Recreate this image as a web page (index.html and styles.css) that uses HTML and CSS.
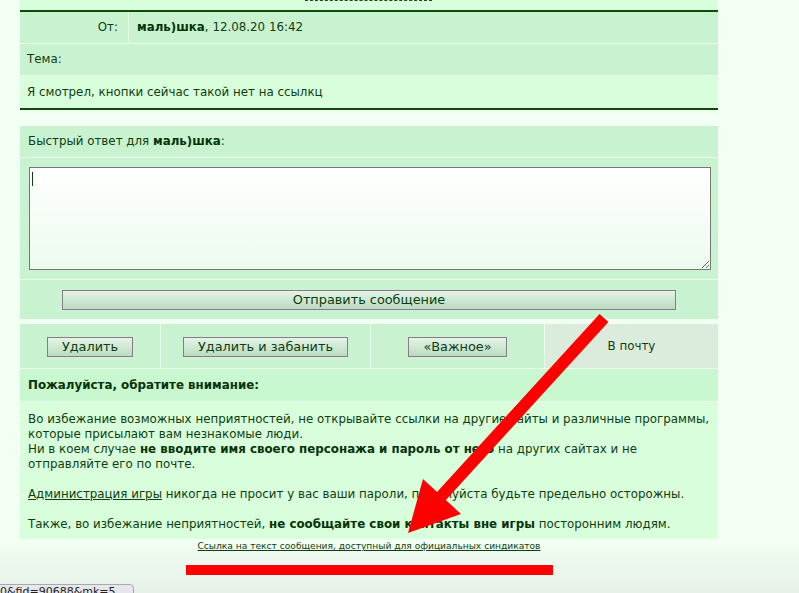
FILE: index.html
```html
<!DOCTYPE html>
<html lang="ru">
<head>
<meta charset="utf-8">
<title>Сообщение</title>
<link rel="stylesheet" href="styles.css">
</head>
<body>
<div class="page">
  <div class="topbar"><span class="dash"></span></div>

  <div class="post">
    <div class="meta">
      <div class="lbl">От:</div>
      <div class="val"><b>маль)шка</b>, 12.08.20 16:42</div>
    </div>
    <div class="subj">Тема:</div>
    <div class="msg">Я смотрел, кнопки сейчас такой нет на ссылкц</div>
  </div>

  <div class="reply">
    <div class="reply-head">Быстрый ответ для <b>маль)шка</b>:</div>
    <div class="reply-area"><div class="ta-wrap"><textarea class="ta"></textarea></div></div>
    <div class="reply-send"><button class="btn send">Отправить сообщение</button></div>
  </div>

  <div class="actions">
    <div class="cell"><button class="btn">Удалить</button></div>
    <div class="cell"><button class="btn">Удалить и забанить</button></div>
    <div class="cell"><button class="btn">«Важное»</button></div>
    <div class="cell mail">В почту</div>
  </div>

  <div class="notice">
    <div class="notice-head">Пожалуйста, обратите внимание:</div>
    <div class="notice-body">
      <p>Во избежание возможных неприятностей, не открывайте ссылки на другие сайты и различные программы, которые присылают вам незнакомые люди.<br>Ни в коем случае <b>не вводите имя своего персонажа и пароль от него</b> на других сайтах и не отправляйте его по почте.</p>
      <p><a href="#" class="adm">Администрация игры</a> никогда не просит у вас ваши пароли, пожалуйста будьте предельно осторожны.</p>
      <p>Также, во избежание неприятностей, <b>не сообщайте свои контакты вне игры</b> посторонним людям.</p>
    </div>
  </div>

  <div class="linkrow"><a href="#">Ссылка на текст сообщения, доступный для официальных синдикатов</a></div>
</div>

<svg class="annot" width="799" height="593" viewBox="0 0 799 593">
  <rect x="186" y="565" width="367" height="10" fill="#ff0000"/>
  <line x1="604" y1="318" x2="436" y2="502" stroke="#ff0000" stroke-width="12"/>
  <polygon points="408,533 461,514 423,479" fill="#ff0000"/>
</svg>

<div class="status">0&amp;fid=90688&amp;mk=5</div>
</body>
</html>
```
FILE: styles.css
```css
html, body {
  margin: 0;
  padding: 0;
}
body {
  width: 799px;
  height: 593px;
  overflow: hidden;
  position: relative;
  background: linear-gradient(#f2fff3 0, #f2fff3 540px, #e6f0e7 593px);
  font-family: "DejaVu Sans", Verdana, sans-serif;
  font-size: 11.85px;
  color: #0e3d10;
}
b { color: #063306; }
.page {
  width: 698px;
  margin-left: 20px;
}
.topbar {
  height: 10px;
  background: #d8fedb;
  position: relative;
}
.dash {
  display: block;
  margin-left: 285px;
  width: 127px;
  height: 2px;
  border-top: 1px dashed #1a4a1a;
}
.post {
  border-top: 2px solid #0d4a0d;
  border-bottom: 2px solid #0d4a0d;
  display: flex;
  flex-direction: column;
  gap: 1px;
  background: #eafcec;
}
.meta {
  display: flex;
  height: 31px;
  background: #c9f3d0;
  gap: 1px;
}
.meta .lbl {
  width: 98px;
  padding-right: 10px;
  text-align: right;
  line-height: 31px;
  background: #c9f3d0;
  box-shadow: 1px 0 0 #e4f8e6;
}
.meta .val {
  padding-left: 8px;
  line-height: 31px;
}
.subj {
  height: 31px;
  line-height: 31px;
  padding-left: 7px;
  background: #c9f3d0;
}
.msg {
  height: 32px;
  line-height: 32px;
  padding-left: 7px;
  background: #d8fedb;
}
.reply {
  margin-top: 16px;
  display: flex;
  flex-direction: column;
  gap: 1px;
  background: #eafcec;
}
.reply-head {
  height: 31px;
  line-height: 31px;
  padding-left: 8px;
  background: #c9f3d0;
}
.reply-area {
  background: #c9f3d0;
  padding: 9px 7px 9px 9px;
}
.ta-wrap {
  position: relative;
  width: 682px;
  height: 103px;
}
.ta-wrap::after {
  content: "";
  position: absolute;
  left: 3px;
  top: 5px;
  width: 1px;
  height: 14px;
  background: #0e3d10;
}
.ta {
  display: block;
  box-sizing: border-box;
  width: 682px;
  height: 103px;
  margin: 0;
  border: 1px solid #777;
  background: linear-gradient(#ffffff, #ecfbee);
  resize: both;
}
.reply-send {
  background: #c9f3d0;
  height: 39px;
  display: flex;
  align-items: center;
  justify-content: center;
}
.btn {
  font-family: "DejaVu Sans", Verdana, sans-serif;
  font-size: 12.85px;
  color: #0e3d10;
  height: 20px;
  padding: 0 14px;
  border: 1px solid #8a7a8a;
  border-radius: 0;
  background: linear-gradient(#e4f4e6, #b9dcc1);
  line-height: 18px;
}
.send {
  width: 614px;
  margin-top: 1px;
}
.actions {
  margin-top: 5px;
  display: grid;
  grid-template-columns: 140px 209px 173px 173px;
  column-gap: 1px;
  height: 44px;
  background: #eafcec;
  border-bottom: 1px solid #eafcec;
}
.cell {
  background: #c9f3d0;
  display: flex;
  align-items: center;
  justify-content: center;
}
.cell .btn { margin-top: 1px; }
.cell.mail {
  background: #dcecdc;
}
.notice-head {
  height: 32px;
  line-height: 32px;
  padding-left: 8px;
  font-weight: bold;
  color: #063306;
  background: #c9f7cf;
  border-bottom: 1px solid #eafcec;
}
.notice-body {
  background: #d8fedb;
  padding: 10px 4px 7px 8px;
  line-height: 15px;
}
.notice-body p {
  margin: 0 0 15px 0;
}
.notice-body p:last-child { margin-bottom: 0; }
a { color: #0e3d10; }
.adm { color: #0e3d10; }
.linkrow {
  text-align: center;
  font-size: 9.1px;
  padding-top: 1px;
  line-height: 12px;
}
.annot {
  position: absolute;
  left: 0;
  top: 0;
  pointer-events: none;
}
.status {
  position: absolute;
  left: -12px;
  top: 584px;
  width: 146px;
  height: 20px;
  border: 1px solid #a8a8b0;
  border-radius: 4px;
  background: #e6e6ec;
  font-family: "DejaVu Sans", sans-serif;
  font-size: 11px;
  line-height: 14px;
  padding-left: 11px;
  color: #222;
  box-sizing: border-box;
  overflow: hidden;
}
```
